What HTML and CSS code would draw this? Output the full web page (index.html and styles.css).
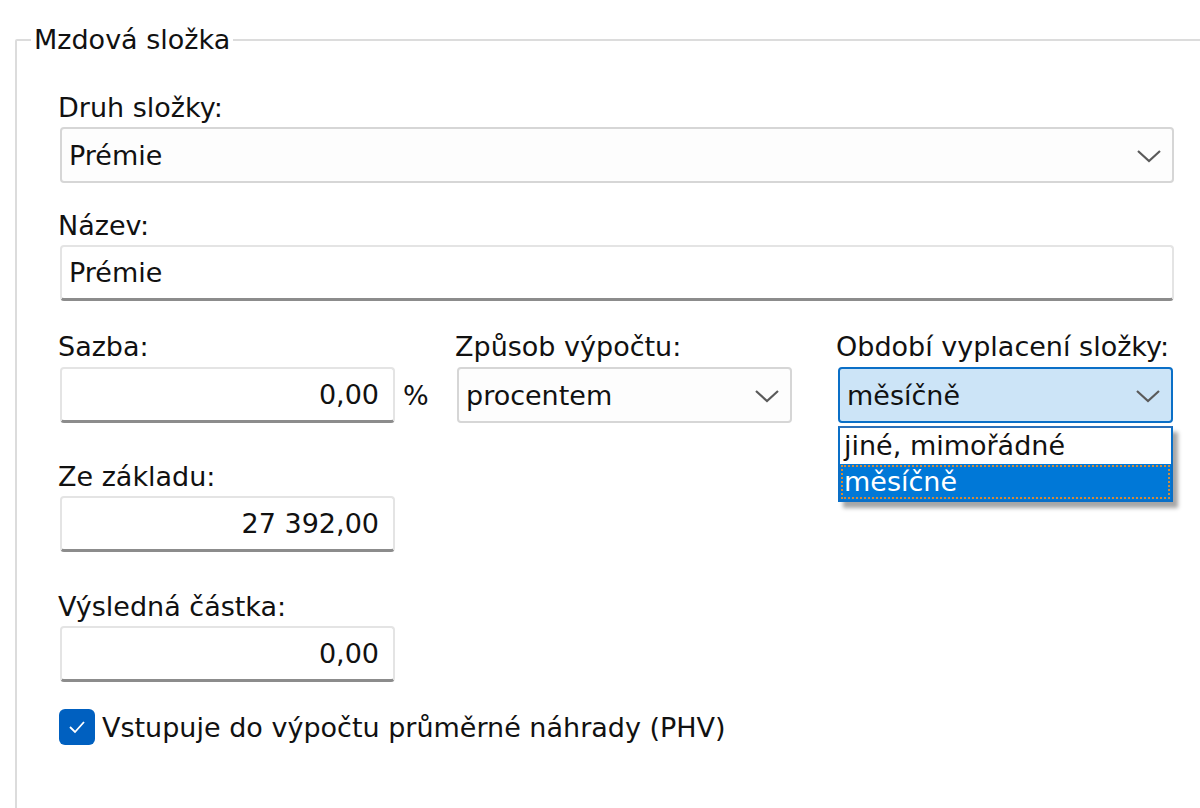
FILE: index.html
```html
<!DOCTYPE html>
<html lang="cs">
<head>
<meta charset="utf-8">
<title>Mzdová složka</title>
<link rel="stylesheet" href="styles.css">
</head>
<body>
<fieldset class="group">
  <legend class="group-title">Mzdová složka</legend>

  <div class="field">
    <div class="label">Druh složky:</div>
    <div class="combo wide">
      <span class="combo-value">Prémie</span>
      <svg class="chev" width="26" height="14" viewBox="0 0 26 14"><path d="M2 2 L13 12 L24 2" fill="none" stroke="#5a5a5a" stroke-width="2.2"/></svg>
    </div>
  </div>

  <div class="field">
    <div class="label">Název:</div>
    <div class="textbox wide"><span class="tb-value">Prémie</span></div>
  </div>

  <div class="row3">
    <div class="col col1">
      <div class="label">Sazba:</div>
      <div class="inline">
        <div class="textbox num"><span class="tb-value">0,00</span></div>
        <span class="unit">%</span>
      </div>
    </div>
    <div class="col col2">
      <div class="label">Způsob výpočtu:</div>
      <div class="combo mid">
        <span class="combo-value">procentem</span>
        <svg class="chev" width="26" height="14" viewBox="0 0 26 14"><path d="M2 2 L13 12 L24 2" fill="none" stroke="#5a5a5a" stroke-width="2.2"/></svg>
      </div>
    </div>
    <div class="col col3">
      <div class="label">Období vyplacení složky:</div>
      <div class="combo mid focused">
        <span class="combo-value">měsíčně</span>
        <svg class="chev" width="26" height="14" viewBox="0 0 26 14"><path d="M2 2 L13 12 L24 2" fill="none" stroke="#5a5a5a" stroke-width="2.2"/></svg>
      </div>
      <ul class="dropdown">
        <li class="opt">jiné, mimořádné</li>
        <li class="opt selected">měsíčně</li>
      </ul>
    </div>
  </div>

  <div class="field short">
    <div class="label">Ze základu:</div>
    <div class="textbox num"><span class="tb-value">27 392,00</span></div>
  </div>

  <div class="field short spaced">
    <div class="label">Výsledná částka:</div>
    <div class="textbox num"><span class="tb-value">0,00</span></div>
  </div>

  <label class="check">
    <span class="box"><svg width="22" height="18" viewBox="0 0 22 18"><path d="M4 9 L9 14 L18 4" fill="none" stroke="#ffffff" stroke-width="1.8"/></svg></span>
    <span class="check-text">Vstupuje do výpočtu průměrné náhrady (PHV)</span>
  </label>
</fieldset>
</body>
</html>
```

FILE: styles.css
```css
html, body {
  margin: 0;
  padding: 0;
  background: #ffffff;
  overflow: hidden;
}
body {
  width: 1200px;
  height: 808px;
  font-family: "DejaVu Sans", sans-serif;
  font-size: 27px;
  color: #111111;
}
.group {
  margin: 25px 0 0 15px;
  padding: 0 0 0 41px;
  width: 1400px;
  height: 900px;
  border: 2px solid #dcdcdc;
  border-radius: 2px;
  box-sizing: border-box;
}
.group-title {
  padding: 0 3px;
  margin-left: -27px;
  line-height: 30px;
  color: #111111;
}
.label {
  line-height: 32px;
  height: 32px;
}
.field + .field {
  margin-top: 27px;
}
.group-title + .field {
  margin-top: 37px;
}
.field .label {
  margin-bottom: 3px;
}
.wide {
  width: 1114px;
}
.combo {
  box-sizing: border-box;
  height: 56px;
  margin-left: 2px;
  border: 2px solid #d6d6d6;
  border-radius: 4px;
  background: #fdfdfd;
  display: flex;
  align-items: center;
  justify-content: space-between;
  padding: 0 10px 0 7px;
}
.combo-value {
  line-height: 1;
}
.chev {
  display: block;
  margin-top: 2px;
}
.textbox {
  box-sizing: border-box;
  height: 56px;
  margin-left: 2px;
  border: 2px solid #e4e4e4;
  border-bottom: 3px solid #8c8c8c;
  border-radius: 4px;
  background: #ffffff;
  display: flex;
  align-items: center;
  padding: 0 7px;
}
.num {
  width: 335px;
  justify-content: flex-end;
  padding-right: 14px;
}
.row3 {
  display: flex;
  margin-top: 30px;
}
.col {
  position: relative;
}
.col1 {
  width: 397px;
}
.col2 {
  width: 381px;
}
.col3 {
  width: 340px;
}
.row3 .label {
  margin-bottom: 4px;
}
.inline {
  display: flex;
  align-items: center;
}
.unit {
  margin-left: 8px;
}
.mid {
  width: 335px;
}
.focused {
  background: #cce4f7;
  border: 2px solid #0a6fc7;
}
.dropdown {
  position: absolute;
  left: 2px;
  top: 95px;
  width: 335px;
  box-sizing: border-box;
  margin: 0;
  padding: 0;
  list-style: none;
  background: #ffffff;
  border: 2px solid #0a6fc7;
  border-top-color: #2a6fb8;
  box-shadow: 5px 6px 4px rgba(0, 0, 0, 0.35);
}
.opt {
  height: 36px;
  line-height: 36px;
  padding-left: 4px;
}
.opt.selected {
  background: #0078d7;
  color: #ffffff;
  outline: 2px dotted #d28a3a;
  outline-offset: -3px;
}
.field.short {
  margin-top: 38px;
}
.field.short.spaced {
  margin-top: 39px;
}
.check {
  display: flex;
  align-items: center;
  margin-top: 27px;
}
.box {
  width: 36px;
  height: 36px;
  border-radius: 6px;
  background: #0060c0;
  display: flex;
  align-items: center;
  justify-content: center;
  margin-left: 1px;
}
.check-text {
  margin-left: 7px;
}
```
